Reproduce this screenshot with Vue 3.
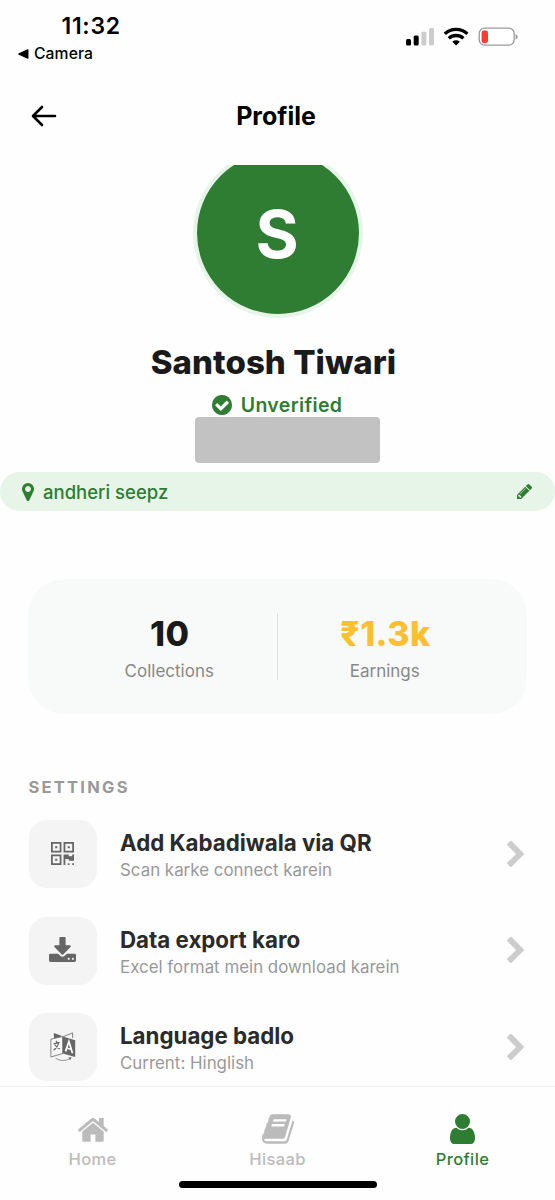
<script setup>
const settings = [
  { icon: 'qr', title: 'Add Kabadiwala via QR', sub: 'Scan karke connect karein' },
  { icon: 'download', title: 'Data export karo', sub: 'Excel format mein download karein' },
  { icon: 'language', title: 'Language badlo', sub: 'Current: Hinglish' },
]
</script>

<template>
  <div class="screen">
    <div class="status">
      <div class="status-left">
        <div class="time">11:32</div>
        <div class="back-app">
          <svg width="11" height="10" viewBox="0 0 11 10"><path d="M.8 4.2 9.6.3q.9-.3.9.6v8.2q0 .9-.9.6L.8 5.8q-1-.8 0-1.6z" /></svg>
          <span>Camera</span>
        </div>
      </div>
      <svg class="status-icons" width="113" height="22" viewBox="0 0 113 22">
        <rect x="1" y="12" width="5" height="6.6" rx="1.5" />
        <rect x="8.7" y="8.6" width="5" height="10" rx="1.5" />
        <rect x="16.4" y="4.8" width="5" height="13.8" rx="1.5" fill="#ccc" />
        <rect x="24" y="1" width="5" height="17.6" rx="1.5" fill="#ccc" />
        <g fill="none" stroke="#000" stroke-width="3.3">
          <path d="M39.8 6.9a16.6 16.6 0 0 1 22.6 0" />
          <path d="M43.8 11.4a10.7 10.7 0 0 1 14.6 0" />
        </g>
        <path d="M51.1 18.4 47.3 14.7q3.8-2.9 7.6 0z" />
        <rect x="74.2" y="1.2" width="35" height="17" rx="5.4" fill="#fff" stroke="#999" stroke-width="1.3" />
        <rect x="76.6" y="3.5" width="6.4" height="12.4" rx="2.2" fill="#ff3b30" />
        <path d="M110.6 7.2q2.2.5 2.2 2.6t-2.2 2.6z" fill="#999" />
      </svg>
    </div>

    <header class="header">
      <svg class="back" width="26" height="22" viewBox="0 0 26 22" fill="none" stroke="#000" stroke-width="2.6" stroke-linecap="round" stroke-linejoin="round"><path d="M11 2 2 11l9 9M2.4 11H24" /></svg>
      <h1>Profile</h1>
    </header>

    <main class="content">
      <div class="avatar"><span>S</span></div>
      <h2 class="name">Santosh Tiwari</h2>
      <div class="verify">
        <svg width="20" height="20" viewBox="128 128 1536 1536"><path d="M1412 734q0-28-18-46l-91-90q-19-19-45-19t-45 19l-408 407-226-226q-19-19-45-19t-45 19l-91 90q-18 18-18 46 0 27 18 45l362 362q19 19 45 19 27 0 46-19l543-543q18-18 18-45zm252 162q0 209-103 385.5t-279.5 279.5-385.5 103-385.5-103-279.5-279.5-103-385.5 103-385.5 279.5-279.5 385.5-103 385.5 103 279.5 279.5 103 385.5z" /></svg>
        <span>Unverified</span>
      </div>
      <div class="redacted"></div>
      <div class="address">
        <svg width="12" height="18" viewBox="384 128 1024 1536"><path d="M1152 640q0-106-75-181t-181-75-181 75-75 181 75 181 181 75 181-75 75-181zm256 0q0 109-33 179l-364 774q-16 33-47.5 52t-67.5 19-67.5-19-46.5-52l-365-774q-33-70-33-179 0-212 150-362t362-150 362 150 150 362z" /></svg>
        <span>andheri seepz</span>
        <svg class="pencil" width="15" height="15" viewBox="128 149 1515 1515"><path d="M491 1536l91-91-235-235-91 91v107h128v128h107zm523-928q0-22-22-22-10 0-17 7l-542 542q-7 7-7 17 0 22 22 22 10 0 17-7l542-542q7-7 7-17zm-54-192l416 416-832 832h-416v-416zm683 96q0 53-37 90l-166 166-416-416 166-165q36-38 90-38 53 0 91 38l235 234q37 39 37 91z" /></svg>
      </div>

      <section class="stats">
        <div class="stat">
          <strong>10</strong>
          <span>Collections</span>
        </div>
        <div class="divider"></div>
        <div class="stat earn">
          <strong>₹1.3k</strong>
          <span>Earnings</span>
        </div>
      </section>

      <h3 class="section-title">SETTINGS</h3>
      <div class="list">
        <div v-for="s in settings" :key="s.title" class="row">
          <div class="tile">
            <svg v-if="s.icon === 'qr'" class="qr" width="23" height="23" viewBox="0 0 22 22" fill="#666">
              <path fill-rule="evenodd" d="M0 0h10v10H0zM1.7 1.7v6.6h6.6V1.7zM12 0h10v10H12zM13.7 1.7v6.6h6.6V1.7zM0 12h10v10H0zM1.7 13.7v6.6h6.6v-6.6z" />
              <path d="M4 4h2v2H4zM16 4h2v2h-2zM4 16h2v2H4zM12 12h5v1.6h3.3V12H22v6h-5v-1.7h-3.3V22H12zM16 20.3h1.7V22H16zM20.3 20.3H22V22h-1.7z" />
            </svg>
            <svg v-else-if="s.icon === 'download'" class="download" width="27" height="25" viewBox="64 0 1664 1536" fill="#666"><path d="M1344 1344q0-26-19-45t-45-19-45 19-19 45 19 45 45 19 45-19 19-45zm256 0q0-26-19-45t-45-19-45 19-19 45 19 45 45 19 45-19 19-45zm128-224v320q0 40-28 68t-68 28h-1472q-40 0-68-28t-28-68v-320q0-40 28-68t68-28h465l135 136q58 56 136 56t136-56l136-136h464q40 0 68 28t28 68zm-325-569q17 41-14 70l-448 448q-18 19-45 19t-45-19l-448-448q-31-29-14-70 17-39 59-39h256v-448q0-26 19-45t45-19h256q26 0 45 19t19 45v448h256q42 0 59 39z" /></svg>
            <svg v-else width="26" height="30" viewBox="0 0 26 30">
              <path d="M3.8 1 12.7 4.3 4 6.8z" fill="#666" />
              <path d="M13 4.8 22.6.9V6" fill="none" stroke="#777" stroke-width=".9" />
              <path d="M.9 7.2 12.7 4.6V21.5L.9 25z" fill="#fafafa" stroke="#777" stroke-width=".9" />
              <path d="M12.7 4.5 25.2 8.2V25L12.7 21.4z" fill="#666" />
              <path d="M3.6 11.8 9.6 10.4M6.1 8.8 7 10.8M8.6 10.8Q7.7 15.3 3.4 18.2M4.8 12.8Q6.8 16 9.9 16.8" fill="none" stroke="#666" stroke-width="1.2" />
              <path d="M15.5 19.4 18.9 9.5 22.5 21.2M16.9 16.3 20.8 17.3" fill="none" stroke="#fff" stroke-width="1.7" />
              <path d="M5.5 26.3Q12.5 30.5 20 26.7" fill="none" stroke="#888" stroke-width=".9" />
              <path d="M18.2 25.6 21.6 25.3 20.3 28z" fill="#666" />
            </svg>
          </div>
          <div class="row-text">
            <div class="row-title">{{ s.title }}</div>
            <div class="row-sub">{{ s.sub }}</div>
          </div>
          <svg class="chevron" width="17" height="26" viewBox="346 38 1036 1600" fill="#ccc"><path d="M1363 877l-742 742q-19 19-45 19t-45-19l-166-166q-19-19-19-45t19-45l531-531-531-531q-19-19-19-45t19-45l166-166q19-19 45-19t45 19l742 742q19 19 19 45t-19 45z" /></svg>
        </div>
      </div>
    </main>

    <nav class="tabs">
      <div class="tab">
        <div class="tab-icon"><svg width="30" height="25" viewBox="89 220 1614 1316"><path d="M1472 992v480q0 26-19 45t-45 19h-384v-384h-256v384h-384q-26 0-45-19t-19-45v-480q0-1 .5-3t.5-3l575-474 575 474q1 2 1 6zm223-69l-62 74q-8 9-21 11h-3q-13 0-21-7l-692-577-692 577q-12 8-24 7-13-2-21-11l-62-74q-8-10-7-23.5t11-21.5l719-599q32-26 76-26t76 26l244 204v-195q0-14 9-23t23-9h192q14 0 23 9t9 23v408l219 182q10 8 11 21.5t-7 23.5z" /></svg></div>
        <span>Home</span>
      </div>
      <div class="tab">
        <div class="tab-icon"><svg width="32" height="30" viewBox="64 128 1664 1536"><path d="M1703 478q40 57 18 129l-275 906q-19 64-76.5 107.5t-122.5 43.5h-923q-77 0-148.5-53.5t-99.5-131.5q-24-67-2-127 0-4 3-27t4-37q1-8-3-21.5t-3-19.5q2-11 8-21t16.5-23.5 16.5-23.5q23-38 45-91.5t30-91.5q3-10 .5-30t-.5-28q3-11 17-28t17-23q21-36 42-92t25-90q1-9-2.5-32t.5-28q4-13 22-30.5t22-22.5q19-26 42.5-84.5t27.5-96.5q1-8-3-25.5t-2-26.5q2-8 9-18t18-23 17-21q8-12 16.5-30.5t15-35 16-36 19.5-32 26.5-23.5 36-11.5 47.5 5.5l-1 3q38-9 51-9h761q74 0 114 56t18 130l-274 906q-36 119-71.5 153.5t-128.5 34.5h-869q-27 0-38 15-11 16-1 43 24 70 144 70h923q29 0 56-15.5t35-41.5l300-987q7-22 5-57 38 15 59 43zm-1064 2q-4 13 2 22.5t20 9.5h608q13 0 25.5-9.5t16.5-22.5l21-64q4-13-2-22.5t-20-9.5h-608q-13 0-25.5 9.5t-16.5 22.5zm-83 256q-4 13 2 22.5t20 9.5h608q13 0 25.5-9.5t16.5-22.5l21-64q4-13-2-22.5t-20-9.5h-608q-13 0-25.5 9.5t-16.5 22.5z" /></svg></div>
        <span>Hisaab</span>
      </div>
      <div class="tab active">
        <div class="tab-icon"><svg width="25" height="30" viewBox="256 128 1280 1536"><path d="M1536 1399q0 109-62.5 187t-150.5 78h-854q-88 0-150.5-78t-62.5-187q0-85 8.5-160.5t31.5-152 58.5-131 94-89 134.5-34.5q131 128 313 128t313-128q76 0 134.5 34.5t94 89 58.5 131 31.5 152 8.5 160.5zm-256-887q0 159-112.5 271.5t-271.5 112.5-271.5-112.5-112.5-271.5 112.5-271.5 271.5-112.5 271.5 112.5 112.5 271.5z" /></svg></div>
        <span>Profile</span>
      </div>
      <div class="home-bar"></div>
    </nav>
  </div>
</template>

<style>
body {
  background: #fefefe;
}
</style>

<style scoped>
.screen {
  width: 555px;
  height: 1200px;
  display: flex;
  flex-direction: column;
  overflow: hidden;
  background: #fefefe;
  font-family: Inter, "Liberation Sans", sans-serif;
  color: #1a1a1a;
}
svg {
  display: block;
  flex: none;
}
h1, h2, h3 {
  margin: 0;
}
span, strong, h1, h2, h3, .time, .row-title, .row-sub {
  white-space: nowrap;
}
.status {
  height: 66px;
  display: flex;
  justify-content: space-between;
  color: #000;
}
.status-left {
  padding: 12px 0 0 18px;
}
.time {
  padding-left: 43.5px;
  font-size: 23px;
  line-height: 28px;
  font-weight: 600;
  letter-spacing: .7px;
}
.back-app {
  display: flex;
  align-items: center;
  gap: 5px;
  line-height: 27px;
  font-size: 15.7px;
  font-weight: 500;
  letter-spacing: .1px;
}
.status-icons {
  margin: 27px 37px 0 0;
}
.header {
  height: 99px;
  position: relative;
  display: flex;
  justify-content: center;
}
.back {
  position: absolute;
  left: 31px;
  top: 39px;
}
h1 {
  padding: 1px 3px 0 0;
  font-size: 25px;
  line-height: 98px;
  font-weight: 700;
  color: #000;
}
.content {
  height: 921px;
  overflow: hidden;
  display: flex;
  flex-direction: column;
}
.avatar {
  width: 162px;
  height: 162px;
  flex: none;
  margin: -17px auto 0;
  border: 4px solid #e6f5e8;
  border-radius: 50%;
  background: #2e7d32;
  display: flex;
  align-items: center;
  justify-content: center;
  color: #fff;
  font-size: 66px;
  line-height: 80px;
  font-weight: 700;
}
.avatar span {
  padding: 2px 1px 0 0;
}
.name {
  margin: 24px 8px 0 0;
  font-size: 33px;
  line-height: 40px;
  font-weight: 800;
  letter-spacing: .05px;
  text-align: center;
}
.verify {
  display: flex;
  justify-content: center;
  align-items: center;
  gap: 9px;
  height: 30px;
  margin: 8px 1px 0 0;
  color: #2e7d32;
  fill: #2e7d32;
  font-size: 19.5px;
  font-weight: 600;
  letter-spacing: .35px;
}
.redacted {
  width: 185px;
  height: 46px;
  flex: none;
  margin: -3.5px 0 0 195px;
  border-radius: 4px;
  background: #c2c2c2;
  position: relative;
}
.address {
  height: 39px;
  flex: none;
  box-sizing: border-box;
  margin-top: 9.5px;
  padding: 0 23px 0 22px;
  border-radius: 20px;
  background: #e6f5e8;
  display: flex;
  align-items: center;
  gap: 9px;
  color: #2e7d32;
  fill: #2e7d32;
  font-size: 18.5px;
  font-weight: 500;
}
.pencil {
  margin-left: auto;
}
.stats {
  margin: 68px 28px 0;
  height: 135px;
  flex: none;
  border-radius: 36px;
  background: #f8faf9;
  display: flex;
  align-items: center;
  justify-content: center;
}
.stat {
  width: 214px;
  padding-top: 5px;
  display: flex;
  flex-direction: column;
  align-items: center;
}
.stat strong {
  font-size: 34px;
  line-height: 40px;
  font-weight: 800;
  letter-spacing: .4px;
}
.stat span {
  font-size: 17px;
  line-height: 26px;
  margin-top: 4px;
  padding-right: 1px;
  color: #888;
}
.earn strong {
  color: #fbc02d;
}
.divider {
  width: 1.5px;
  height: 67px;
  background: #e0e0e0;
}
.section-title {
  margin: 63px 0 0 28.5px;
  font-size: 16.5px;
  line-height: 20px;
  font-weight: 700;
  letter-spacing: 2.25px;
  color: #999;
}
.list {
  margin-top: 23px;
  display: flex;
  flex-direction: column;
  gap: 28.6px;
}
.row {
  height: 68px;
  display: flex;
  align-items: center;
  padding: 0 31px 0 28.5px;
}
.tile {
  width: 68.5px;
  height: 68px;
  border-radius: 18px;
  background: #f4f4f4;
  display: flex;
  align-items: center;
  justify-content: center;
}
.qr {
  margin-bottom: 2px;
}
.download {
  margin-bottom: 2px;
}
.row-text {
  flex: 1;
  padding: 4px 0 0 23px;
}
.row-title {
  font-size: 22.3px;
  line-height: 28px;
  font-weight: 700;
  letter-spacing: 0;
  color: #2b2b2b;
}
.row-sub {
  font-size: 16.9px;
  line-height: 26px;
  color: #999;
}
.chevron {
  margin-bottom: 1px;
}
.tabs {
  height: 114px;
  box-sizing: border-box;
  border-top: 1.5px solid #eee;
  position: relative;
  display: flex;
}
.tab {
  flex: 1;
  display: flex;
  flex-direction: column;
  align-items: center;
  padding-top: 26px;
  color: #bbb;
  fill: #bbb;
  font-size: 16.5px;
  line-height: 26px;
  font-weight: 500;
  letter-spacing: .35px;
}
.tab-icon {
  height: 33px;
  display: flex;
  align-items: center;
}
.tab-icon svg {
  margin-bottom: 1px;
}
.active {
  color: #2e7d32;
  fill: #2e7d32;
}
.home-bar {
  position: absolute;
  left: 179px;
  top: 94px;
  width: 198px;
  height: 7px;
  border-radius: 4px;
  background: #000;
}
</style>
